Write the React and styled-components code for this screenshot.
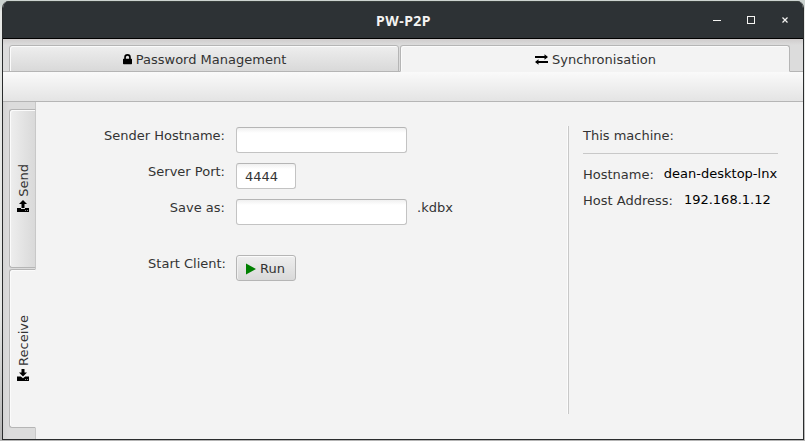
import React from "react";
import styled, { createGlobalStyle } from "styled-components";

const Global = createGlobalStyle`
  * { box-sizing: border-box; }
  body {
    margin: 0;
    background: #cfd4d1;
    font: 13px/16px "DejaVu Sans", sans-serif;
    color: #333;
    overflow: hidden;
  }
`;

const Desktop = styled.div`
  height: 441px;
  padding: 1px 1px 1px 2px;
  background: linear-gradient(#ccd3d0 0 4px, #e6e8e6 12px, #e6e8e6 70%, #b4b4b4);
`;

const Window = styled.div`
  height: 439px;
  display: flex;
  flex-direction: column;
  border: 1px solid #2a2c2d;
  border-top: 0;
  border-radius: 7px 7px 0 0;
  background: #f3f3f3;
  overflow: hidden;
`;

const TitleBar = styled.header`
  height: 38px;
  flex: none;
  margin: 0 -1px;
  display: grid;
  grid-template-columns: 1fr auto 1fr;
  align-items: center;
  background: #2d3235;
  border-top: 1px solid #39403d;
  border-bottom: 1px solid #000;
`;

const Title = styled.h1`
  grid-column: 2;
  margin: 2px 0 0 1px;
  font: bold 14px/18px "Noto Sans", sans-serif;
  letter-spacing: 0.45px;
  color: #f4f4f2;
`;

const WindowButtons = styled.div`
  justify-self: end;
  display: flex;
  gap: 22px;
  margin-right: 13px;
  color: #f4f4f2;
`;

const Icon = styled.svg`
  display: block;
  flex: none;
  fill: currentColor;
`;

const TabHeader = styled.nav`
  height: 33px;
  flex: none;
  display: flex;
  gap: 1px;
  padding: 6px 13px 0 6px;
  background: linear-gradient(#cfcccc, #dcdcdc 6px);
  box-shadow: inset 0 -1px #b5b5b5;
`;

const Tab = styled.div`
  flex: 1;
  display: flex;
  align-items: center;
  justify-content: center;
  gap: 4px;
  padding: 2px 0 0 1px;
  border: 1px solid #b5b5b5;
  border-bottom-color: ${(p) => (p.$active ? "#f3f3f3" : "#b5b5b5")};
  border-radius: 3px 3px 0 0;
  color: #333;
  background: ${(p) => (p.$active ? "#f3f3f3" : "linear-gradient(#eeeeee, #d9d9d9)")};
  box-shadow: inset 1px 1px #fbfbfb;
`;

const ToolBar = styled.div`
  height: 30px;
  flex: none;
  background: linear-gradient(#fafafa, #e4e4e4);
  border-bottom: 1px solid #b5b5b5;
`;

const Body = styled.div`
  flex: 1;
  display: flex;
`;

const SideTabs = styled.nav`
  width: 33px;
  display: flex;
  flex-direction: column;
  gap: 1px;
  padding: 7px 0 0 6px;
  background: linear-gradient(90deg, #d4d4d4, #dcdcdc 6px);
  box-shadow: inset -1px 0 #c8c8c8;
`;

const SideTab = styled.div`
  height: 159px;
  display: flex;
  flex-direction: column;
  align-items: center;
  justify-content: center;
  gap: 3px;
  padding-bottom: 1px;
  border: 1px solid #b5b5b5;
  border-right-color: ${(p) => (p.$active ? "#f3f3f3" : "#c8c8c8")};
  border-radius: 3px 0 0 3px;
  background: ${(p) => (p.$active ? "#f3f3f3" : "linear-gradient(90deg, #eeeeee, #d9d9d9)")};
  box-shadow: inset 1px 1px #fbfbfb;
`;

const SideLabel = styled.span`
  writing-mode: vertical-rl;
  transform: rotate(180deg);
  margin-left: 2px;
`;

const Form = styled.form`
  width: 532px;
  padding: 25px 0 0 0;
  display: grid;
  grid-template-columns: 190px 1fr;
  grid-template-rows: 26px 26px 26px 26px;
  row-gap: 10px;
  column-gap: 10px;
  align-content: start;
`;

const Label = styled.label`
  justify-self: end;
  padding: 1px ${(p) => (p.$offset ? 0 : 1)}px 0 0;
  margin-top: ${(p) => p.$offset || 0}px;
`;

const FieldLine = styled.div`
  display: flex;
  gap: 10px;
  margin-top: ${(p) => p.$offset || 0}px;
`;

const Field = styled.input`
  width: ${(p) => p.$width}px;
  height: 26px;
  padding: 0 8px;
  font: inherit;
  color: #333;
  border: 1px solid #c3c3c3;
  border-top-color: #b5b5b5;
  border-radius: 3px;
  outline: none;
  background: linear-gradient(#f0f0f0, #fff 5px);
`;

const RunButton = styled.button`
  width: 60px;
  height: 26px;
  display: flex;
  align-items: center;
  gap: 4px;
  padding: 1px 0 0 9px;
  font: inherit;
  color: #333;
  border: 1px solid #b5b5b5;
  border-radius: 3px;
  background: linear-gradient(#eeeeee, #d9d9d9);
  box-shadow: inset 0 1px #fbfbfb, inset 1px 0 #f0f0f0;
`;

const Suffix = styled.span`
  padding-top: 1px;
`;

const Machine = styled.aside`
  width: 210px;
  height: 288px;
  margin-top: 24px;
  padding: 2px 0 0 14px;
  border-left: 1px solid #c8c8c8;
  box-shadow: -1px 0 #fbfbfb;
`;

const Heading = styled.h2`
  margin: 0;
  height: 26px;
  border-bottom: 1px solid #c8c8c8;
  font: inherit;
`;

const Info = styled.div`
  display: flex;
  gap: 11px;
  height: 26px;
  padding-top: 1px;
  &:first-of-type { margin-top: 12px; gap: 10px; }
`;

const Value = styled.span`
  margin-top: -1px;
  color: #000;
`;

export default function App() {
  return (
    <>
      <Global />
      <Desktop>
        <Window>
          <TitleBar>
            <Title>PW-P2P</Title>
            <WindowButtons>
              <Icon width="12" height="12"><path d="M2 6h8v1H2z" /></Icon>
              <Icon width="12" height="12"><path fillRule="evenodd" d="M2 2h8v8H2zM3 3v6h6V3z" /></Icon>
              <Icon width="12" height="12"><path d="M3.500 3.500l5 5m0-5l-5 5" stroke="currentColor" strokeWidth="1.200" /></Icon>
            </WindowButtons>
          </TitleBar>
          <TabHeader>
            <Tab>
              <Icon width="9" height="11" color="#000"><path fillRule="evenodd" d="M0 5.500Q0 4.800 .6 4.800H1.200V3.300a3.300 3.300 0 0 1 6.600 0V4.800h.6q.6 0 .6.700v4q0 .7-.7.7H.7Q0 10.200 0 9.500zM2.900 4.800h3.200V3.300a1.600 1.600 0 0 0-3.200 0z" /></Icon>
              Password Management
            </Tab>
            <Tab $active>
              <Icon width="13" height="12" color="#000"><path d="M0 2h9.500V.3L13 3 9.500 5.700V4H0zM13 7v2H3.500v1.700L0 8l3.500-2.700V7z" /></Icon>
              Synchronisation
            </Tab>
          </TabHeader>
          <ToolBar />
          <Body>
            <SideTabs>
              <SideTab>
                <SideLabel>Send</SideLabel>
                <Icon width="12" height="12" color="#000"><path fillRule="evenodd" d="M6 0l4 4H7.500v4h-3V4H2zM0 8h4v1h4V8h4v3.500q0 .5-.5.500H.5Q0 12 0 11.500zM8 10v.8h.8V10zM10 10v.8h.8V10z" /></Icon>
              </SideTab>
              <SideTab $active>
                <SideLabel>Receive</SideLabel>
                <Icon width="12" height="12" color="#000"><path fillRule="evenodd" d="M4.500 0h3v3.500H10L6 7.500 2 3.500h2.500zM0 7.500h3.800L6 9.300l2.200-1.800H12v4q0 .5-.5.500H.5Q0 12 0 11.500zM8 10v.8h.8V10zM10 10v.8h.8V10z" /></Icon>
              </SideTab>
            </SideTabs>
            <Form>
              <Label>Sender Hostname:</Label>
              <FieldLine><Field $width={171} /></FieldLine>
              <Label>Server Port:</Label>
              <FieldLine><Field $width={60} defaultValue="4444" /></FieldLine>
              <Label>Save as:</Label>
              <FieldLine><Field $width={171} /><Suffix>.kdbx</Suffix></FieldLine>
              <Label $offset={20}>Start Client:</Label>
              <FieldLine $offset={20}>
                <RunButton type="button">
                  <Icon width="10" height="12" color="#008000"><path d="M0 .500L10 6 0 11.500z" /></Icon>
                  Run
                </RunButton>
              </FieldLine>
            </Form>
            <Machine>
              <Heading>This machine:</Heading>
              <Info><span>Hostname:</span><Value>dean-desktop-lnx</Value></Info>
              <Info><span>Host Address:</span><Value>192.168.1.12</Value></Info>
            </Machine>
          </Body>
        </Window>
      </Desktop>
    </>
  );
}
